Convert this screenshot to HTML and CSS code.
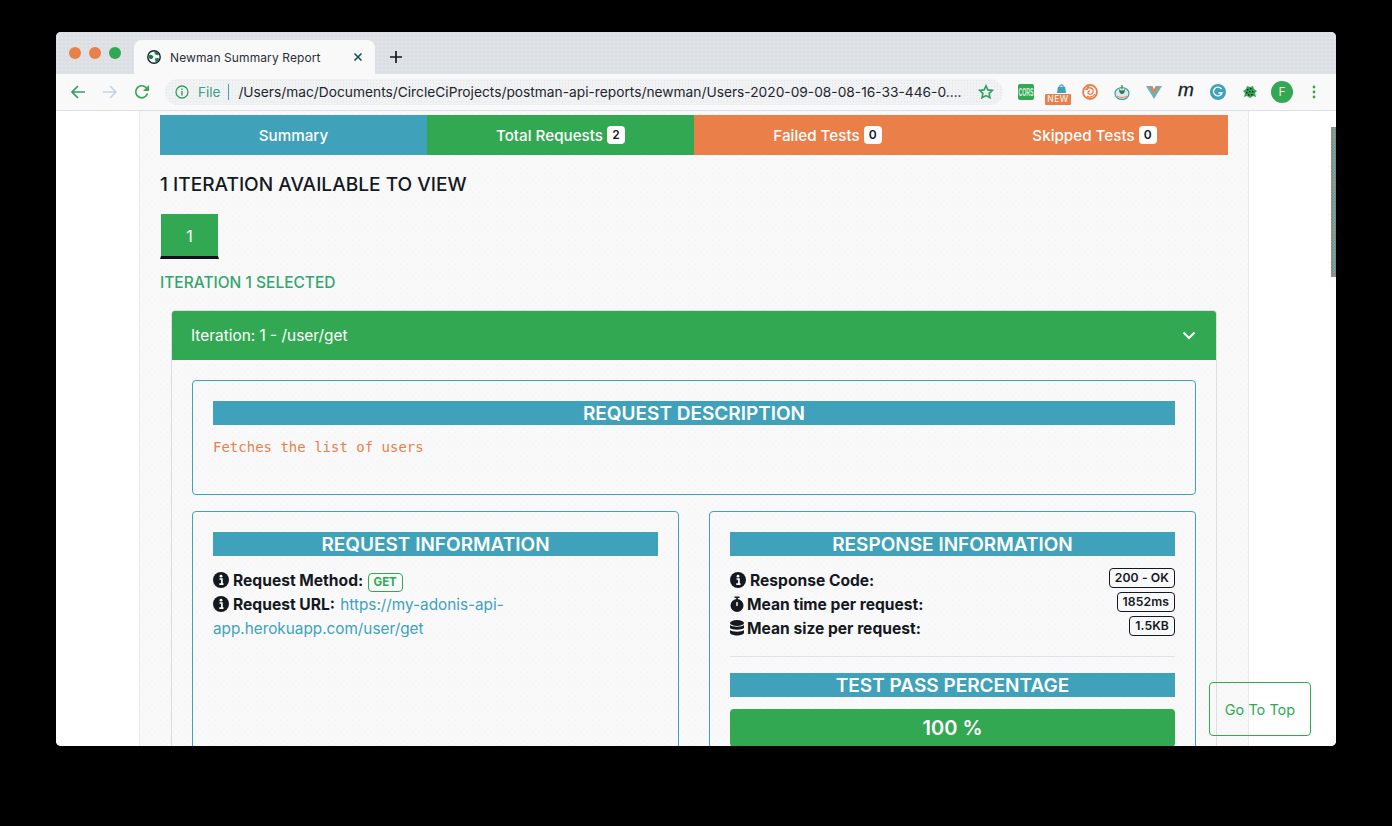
FILE: index.html
```html
<!DOCTYPE html>
<html lang="en">
<head>
    <meta charset="UTF-8">
    <title>Newman Summary Report</title>
    <link rel="stylesheet" href="styles.css">
</head>
<body>
    <div class="window">
        <div class="titlebar">
            <div class="lights">
                <span class="light orange"></span>
                <span class="light orange"></span>
                <span class="light green"></span>
            </div>
            <div class="tab">
                <svg class="favicon" viewBox="0 0 14 14"><circle cx="7" cy="7" r="6.2" fill="#f9f9fa" stroke="#15202b" stroke-width="1.4"/><path d="M1.500 5.500c2-1.500 3.500-.5 4.500.5s-.5 2.500-1.500 3-2.500-.5-3-2zM7.500 1.500c2 0 3.500 1 4.500 3-1 1.500-3 .5-4.500-1zM8 8.500c2-1 4-.5 4 .5s-2 3-3.500 3z" fill="#1d7a45"/></svg>
                <span class="tab-title">Newman Summary Report</span>
                <svg class="tab-close" viewBox="0 0 10 10"><path d="M1.500 1.500l7 7M8.500 1.500l-7 7" stroke="#14505a" stroke-width="1.6"/></svg>
            </div>
            <svg class="new-tab" viewBox="0 0 12 12"><path d="M6 0v12M0 6h12" stroke="#14181f" stroke-width="1.7"/></svg>
        </div>

        <div class="toolbar">
            <div class="slot">
                <svg class="nav-icon" viewBox="0 0 16 16"><path d="M15 8H2M8 2L2 8l6 6" fill="none" stroke="#2f9e63" stroke-width="1.7"/></svg>
            </div>
            <div class="slot">
                <svg class="nav-icon" viewBox="0 0 16 16"><path d="M1 8h13M8 2l6 6-6 6" fill="none" stroke="#c6d4e0" stroke-width="1.7"/></svg>
            </div>
            <div class="slot">
                <svg class="nav-icon" viewBox="0 0 16 16"><path d="M13.500 9.500A6 6 0 1 1 12 3.500L14 6" fill="none" stroke="#33a853" stroke-width="1.7"/><path d="M15 1v6H9z" fill="#33a853"/></svg>
            </div>
            <div class="omnibox">
                <svg class="info-icon" viewBox="0 0 14 14"><circle cx="7" cy="7" r="6" fill="none" stroke="#33a05f" stroke-width="1.3"/><path d="M7 6v4.500M7 3.400v1.500" stroke="#33a05f" stroke-width="1.4"/></svg>
                <span class="scheme">File</span>
                <span class="omni-sep"></span>
                <span class="url">/Users/mac/Documents/CircleCiProjects/postman-api-reports/newman/Users-2020-09-08-08-16-33-446-0....</span>
                <svg class="star" viewBox="0 0 16 16"><path d="M8 1.800l1.900 4.100 4.500.5-3.300 3 .9 4.400L8 11.600l-4 2.200.9-4.400-3.300-3 4.500-.5z" fill="none" stroke="#2f9e63" stroke-width="1.600"/></svg>
            </div>
            <div class="slot"><span class="ext-cors"><span class="ext-cors-text">CORS</span></span></div>
            <div class="slot ext-new">
                <svg class="ext-lock" viewBox="0 0 14 10"><path d="M3 3h8l1 7H2z" fill="#3fa1ba"/><path d="M5 3a2 2 0 0 1 4 0" fill="none" stroke="#3fa1ba" stroke-width="1.300"/></svg>
                <span class="ext-new-label">NEW</span>
            </div>
            <div class="slot">
                <svg class="ext-icon" viewBox="0 0 16 16"><circle cx="8" cy="8" r="7" fill="none" stroke="#ea7f4a" stroke-width="1.800"/><path d="M3 6c2-3 7-3 8 0 1 3-2 5-4 4-2-1-1-3 1-3M13 10c-2 3-6 4-8 2M8 1c-2 1-3 3-3 5" fill="none" stroke="#ea7f4a" stroke-width="1.300"/></svg>
            </div>
            <div class="slot">
                <svg class="ext-icon" viewBox="0 0 16 16"><ellipse cx="8" cy="9.500" rx="7" ry="6" fill="#dfe8e6" stroke="#3f9aa8" stroke-width="1.200"/><path d="M5 5c2 2 4 2 6 0 0 3-1 5-3 5S5 8 5 5z" fill="#2f7d55"/><path d="M8 5V1" stroke="#33a853" stroke-width="1.500"/><path d="M3 12c3 2 7 2 10 0" fill="none" stroke="#ea7f4a"/></svg>
            </div>
            <div class="slot">
                <svg class="ext-icon" viewBox="0 0 16 16"><path d="M0 2h16L8 15z" fill="#6fb0b8"/><path d="M3.500 2h9L8 10z" fill="#ea7f4a" opacity=".75"/><path d="M6.500 2h3L8 5.500z" fill="#f9f9fa"/></svg>
            </div>
            <div class="slot"><span class="ext-m">m</span></div>
            <div class="slot">
                <svg class="ext-icon" viewBox="0 0 16 16"><circle cx="8" cy="8" r="8" fill="#3fa1ba"/><path d="M11.500 5A4.400 4.400 0 1 0 12 9H8.500" fill="none" stroke="#f9f9fa" stroke-width="1.400"/></svg>
            </div>
            <div class="slot">
                <svg class="ext-icon" viewBox="0 0 16 16"><path d="M5 2l3 1 3-1 1 3 3 2-2 2 1 4-3-1-3 2-3-2-3 1 1-4-2-2 3-2z" fill="#33a853"/><path d="M5 5h1.500v1.500H5zM8 4h1.500v1.500H8zM10 7h1.500v1.500H10zM7 7h1.500v1.500H7zM4 8h1.500v1.500H4zM6 10h1.500v1.500H6zM9 10h1.500v1.500H9z" fill="#15202b"/></svg>
            </div>
            <div class="slot"><span class="avatar">F</span></div>
            <div class="slot">
                <svg class="kebab" viewBox="0 0 4 16"><circle cx="2" cy="3" r="1.400" fill="#33a853"/><circle cx="2" cy="8" r="1.400" fill="#33a853"/><circle cx="2" cy="13" r="1.400" fill="#33a853"/></svg>
            </div>
        </div>

        <div class="viewport">
            <div class="container">
                <div class="summary-tabs">
                    <a class="summary-tab blue">Summary</a>
                    <a class="summary-tab green-bg">Total Requests <span class="count">2</span></a>
                    <a class="summary-tab orange-bg">Failed Tests <span class="count">0</span></a>
                    <a class="summary-tab orange-bg">Skipped Tests <span class="count">0</span></a>
                </div>

                <h4 class="iter-title">1 ITERATION AVAILABLE TO VIEW</h4>
                <button class="iter-btn">1</button>
                <h6 class="iter-selected">ITERATION 1 SELECTED</h6>

                <div class="card">
                    <div class="card-header">
                        <span>Iteration: 1 - /user/get</span>
                        <svg class="chevron" viewBox="0 0 14 9"><path d="M1.500 1.500L7 7l5.500-5.500" fill="none" stroke="#fff" stroke-width="2"/></svg>
                    </div>
                    <div class="card-body">
                        <div class="panel desc-panel">
                            <h5 class="panel-title">REQUEST DESCRIPTION</h5>
                            <code class="desc">Fetches the list of users</code>
                        </div>
                        <div class="panel-row">
                            <div class="panel">
                                <h5 class="panel-title">REQUEST INFORMATION</h5>
                                <div class="info-line">
                                    <svg class="fa" viewBox="0 0 16 16"><circle cx="8" cy="8" r="8" fill="#14181f"/><path d="M6.500 7h2.400v5M6.300 12.200h4.200" fill="none" stroke="#fff" stroke-width="1.700"/><circle cx="8" cy="4.200" r="1.400" fill="#fff"/></svg><b>Request Method:</b> <span class="badge-get">GET</span>
                                </div>
                                <div class="info-line">
                                    <svg class="fa" viewBox="0 0 16 16"><circle cx="8" cy="8" r="8" fill="#14181f"/><path d="M6.500 7h2.400v5M6.300 12.200h4.200" fill="none" stroke="#fff" stroke-width="1.700"/><circle cx="8" cy="4.200" r="1.400" fill="#fff"/></svg><b>Request URL:</b> <a class="link">https://my-adonis-api-app.herokuapp.com/user/get</a>
                                </div>
                            </div>
                            <div class="panel">
                                <h5 class="panel-title">RESPONSE INFORMATION</h5>
                                <div class="stat-line">
                                    <span class="stat-name"><svg class="fa" viewBox="0 0 16 16"><circle cx="8" cy="8" r="8" fill="#14181f"/><path d="M6.500 7h2.400v5M6.300 12.200h4.200" fill="none" stroke="#fff" stroke-width="1.700"/><circle cx="8" cy="4.200" r="1.400" fill="#fff"/></svg><b>Response Code:</b></span>
                                    <span class="badge">200 - OK</span>
                                </div>
                                <div class="stat-line">
                                    <span class="stat-name"><svg class="fa narrow" viewBox="0 0 14 16"><circle cx="7" cy="9.500" r="6.500" fill="#14181f"/><path d="M4.500 .5h5V2h-5z" fill="#14181f"/><path d="M6.200 2h1.600v2H6.200z" fill="#14181f"/><path d="M7 6v4" stroke="#fff" stroke-width="1.400"/></svg><b>Mean time per request:</b></span>
                                    <span class="badge">1852ms</span>
                                </div>
                                <div class="stat-line">
                                    <span class="stat-name"><svg class="fa narrow" viewBox="0 0 14 16"><ellipse cx="7" cy="3" rx="7" ry="3" fill="#14181f"/><path d="M0 5c2 2.200 12 2.200 14 0v3c-2 2.200-12 2.200-14 0zM0 10c2 2.200 12 2.200 14 0v3c-1 3.300-13 3.300-14 0z" fill="#14181f"/></svg><b>Mean size per request:</b></span>
                                    <span class="badge">1.5KB</span>
                                </div>
                                <hr class="divider">
                                <h5 class="panel-title">TEST PASS PERCENTAGE</h5>
                                <div class="percent">100 %</div>
                            </div>
                        </div>
                    </div>
                </div>
            </div>
            <div class="scroll-thumb"></div>
            <a class="go-top">Go To Top</a>
        </div>
    </div>
</body>
</html>
```

FILE: styles.css
```css
* {
    box-sizing: border-box;
}
html, body {
    height: 100%;
}
body {
    margin: 0;
    padding: 32px 56px 80px;
    background: #000;
    font-family: Inter, "Liberation Sans", sans-serif;
    color: #14181f;
    overflow: hidden;
}
h4, h5, h6 {
    margin: 0;
}

.window {
    width: 1280px;
    height: 714px;
    border-radius: 5px;
    overflow: hidden;
    background: #fff;
    display: flex;
    flex-direction: column;
}

/* browser chrome */
.titlebar {
    height: 42px;
    display: flex;
    align-items: flex-end;
    background-color: #dcdfe4;
    background-image: radial-gradient(#f0f1f4 .5px, transparent .8px);
    background-size: 4px 4px;
    flex-shrink: 0;
}
.lights {
    width: 78px;
    height: 42px;
    padding: 15px 0 0 13px;
    display: flex;
    gap: 8px;
}
.light {
    width: 12px;
    height: 12px;
    border-radius: 50%;
}
.light.orange {
    background: #ea7f4a;
}
.light.green {
    background: #33a853;
}
.tab {
    width: 241px;
    height: 34px;
    background: #f9f9fa;
    border-radius: 8px 8px 0 0;
    display: flex;
    align-items: center;
    padding: 0 12px 0 13px;
    font-size: 12px;
    letter-spacing: .1px;
}
.favicon {
    width: 14px;
    height: 14px;
    margin-right: 9px;
}
.tab-title {
    flex: 1;
    color: #2a2f36;
}
.tab-close {
    width: 10px;
    height: 10px;
}
.new-tab {
    width: 12px;
    height: 12px;
    margin: 0 0 11px 15px;
}
.toolbar {
    height: 37px;
    padding: 0 6px 1px;
    display: flex;
    align-items: center;
    background: #f9f9fa;
    border-bottom: 1px solid #dcdfe8;
    flex-shrink: 0;
}
.slot {
    width: 32px;
    height: 36px;
    display: flex;
    align-items: center;
    justify-content: center;
    flex-shrink: 0;
}
.nav-icon {
    width: 16px;
    height: 16px;
}
.omnibox {
    flex: 1;
    height: 26px;
    margin: 0 7px;
    padding: 0 9px 0 10px;
    border-radius: 13px;
    background-color: #f1f2f4;
    background-image: radial-gradient(#e2e4e8 .5px, transparent .8px);
    background-size: 3px 3px;
    display: flex;
    align-items: center;
    min-width: 0;
}
.info-icon {
    width: 14px;
    height: 14px;
    margin-right: 9px;
}
.scheme {
    color: #3f9d85;
    font-size: 13.500px;
}
.omni-sep {
    width: 1px;
    height: 16px;
    background: #3fa1ba;
    margin: 0 9px 0 8px;
}
.url {
    flex: 1;
    white-space: nowrap;
    overflow: hidden;
    font-size: 13.750px;
    color: #22262c;
}
.star {
    width: 16px;
    height: 16px;
}
.ext-cors {
    width: 16px;
    height: 16px;
    background: #33a853;
    color: #d8efdf;
    font: 700 5.200px/16px "Liberation Sans", sans-serif;
    text-align: center;
    border-radius: 2px;
}
.ext-cors-text {
    display: block;
    transform: scaleY(2);
}
.ext-new {
    flex-direction: column;
    justify-content: flex-start;
    padding-top: 10px;
}
.ext-lock {
    width: 13px;
    height: 9px;
    margin: 0 0 1px 6px;
}
.ext-new-label {
    width: 26px;
    height: 11px;
    background: #ea7f4a;
    color: #fff;
    font-size: 8.500px;
    line-height: 11px;
    letter-spacing: .5px;
    text-align: center;
    border-radius: 1px;
}
.ext-icon {
    width: 16px;
    height: 16px;
}
.ext-m {
    font-family: "Liberation Sans", sans-serif;
    font-style: italic;
    font-size: 19px;
    line-height: 1;
    color: #15202b;
    margin-top: -5px;
    -webkit-text-stroke: .3px #15202b;
}
.avatar {
    width: 22px;
    height: 22px;
    border-radius: 50%;
    background: #33a853;
    color: #f6e6dc;
    text-align: center;
    font-size: 12px;
    line-height: 22px;
}
.kebab {
    width: 4px;
    height: 16px;
}

/* page */
.viewport {
    position: relative;
    flex: 1;
    overflow: hidden;
    background: #fff;
}
.container {
    width: 1110px;
    height: 100%;
    margin-left: 83px;
    padding: 4px 20px 0;
    background-color: #f9f9fa;
    background-image:
        radial-gradient(#eff0f3 .5px, transparent .8px),
        radial-gradient(#eff0f3 .5px, transparent .8px);
    background-size: 6px 6px;
    background-position: 0 0, 3px 3px;
    border-left: 1px solid #e7e9ee;
    border-right: 1px solid #e7e9ee;
}
.summary-tabs {
    display: grid;
    grid-template-columns: repeat(4, 1fr);
    height: 40px;
}
.summary-tab {
    display: flex;
    align-items: center;
    justify-content: center;
    gap: 4px;
    color: #fff;
    font-size: 15.200px;
    font-weight: 500;
}
.blue {
    background: #3fa1ba;
}
.green-bg {
    background: #33a853;
}
.orange-bg {
    background: #ea7f4a;
}
.count {
    min-width: 18px;
    height: 18px;
    padding: 0 5px;
    border-radius: 4px;
    background: #fff;
    color: #14181f;
    font-size: 12px;
    font-weight: 600;
    line-height: 18px;
    text-align: center;
}
.iter-title {
    margin-top: 17px;
    font-size: 19.100px;
    line-height: 24px;
    font-weight: 500;
}
.iter-btn {
    display: block;
    width: 59px;
    height: 45px;
    margin: 18px 0 0;
    padding: 2px 0 0;
    border-style: solid;
    border-color: #14101f transparent;
    border-width: 0 1px 3px;
    background: #33a853 padding-box;
    color: #fff;
    font-family: inherit;
    font-size: 16px;
}
.iter-selected {
    margin-top: 13px;
    font-size: 15.500px;
    line-height: 21px;
    font-weight: 500;
    color: #35a56e;
}
.card {
    margin: 17px 11px 0;
    border: 1px solid #dcdee2;
    border-radius: 4px;
    overflow: hidden;
}
.card-header {
    height: 49px;
    padding: 0 20px 1px 19px;
    background: #33a853;
    color: #fff;
    font-size: 15.400px;
    display: flex;
    align-items: center;
    justify-content: space-between;
}
.chevron {
    width: 14px;
    height: 9px;
}
.card-body {
    padding: 20px;
}
.panel {
    border: 1px solid #3fa1ba;
    border-radius: 4px;
    padding: 20px;
}
.desc-panel {
    height: 115px;
}
.panel-title {
    height: 24px;
    background: #3fa1ba;
    color: #fff;
    font-size: 19px;
    font-weight: 600;
    line-height: 25px;
    text-align: center;
}
.desc {
    display: block;
    margin-top: 12px;
    font-family: "DejaVu Sans Mono", monospace;
    font-size: 14px;
    line-height: 20px;
    color: #ea7f4a;
}
.panel-row {
    display: grid;
    grid-template-columns: 1fr 1fr;
    gap: 30px;
    margin-top: 16px;
    height: 400px;
}
.info-line {
    font-size: 15.300px;
    line-height: 24px;
}
.panel-title + .info-line,
.panel-title + .stat-line {
    margin-top: 13px;
}
.info-line b,
.stat-name b {
    font-size: 15.600px;
    font-weight: 700;
}
.fa {
    width: 16px;
    height: 16px;
    vertical-align: -2px;
    margin-right: 4px;
}
.fa.narrow {
    width: 14px;
    margin-right: 3px;
}
.link {
    color: #3fa1ba;
    margin-left: 1px;
}
.badge-get {
    display: inline-block;
    padding: 0 5px;
    border: 1px solid #33a853;
    border-radius: 4px;
    color: #33a853;
    font-size: 11.500px;
    font-weight: 700;
    line-height: 17px;
}
.stat-line {
    display: flex;
    justify-content: space-between;
    font-size: 15px;
    line-height: 24px;
}
.badge {
    align-self: flex-start;
    margin-top: -1px;
    padding: 0 5px;
    border: 1px solid #14181f;
    border-radius: 4px;
    font-size: 12.200px;
    font-weight: 600;
    line-height: 18px;
    letter-spacing: .1px;
}
.divider {
    margin: 15px 0 16px;
    border: 0;
    border-top: 1px solid #dfe3e8;
}
.percent {
    margin-top: 12px;
    height: 38px;
    border-radius: 4px;
    background: #33a853;
    color: #fff;
    text-align: center;
    font-size: 20px;
    font-weight: 600;
    line-height: 38px;
}
.scroll-thumb {
    position: absolute;
    right: 0;
    top: 16px;
    width: 5px;
    height: 150px;
    background: repeating-conic-gradient(#3fa1ba 0 25%, #ea7f4a 0 50%) 0 0 / 3px 3px;
}
.go-top {
    position: absolute;
    left: 1153px;
    top: 571px;
    width: 102px;
    height: 54px;
    border: 1px solid #33a853;
    border-radius: 4px;
    color: #33a853;
    font-size: 14.500px;
    text-align: center;
    line-height: 54px;
}
```
